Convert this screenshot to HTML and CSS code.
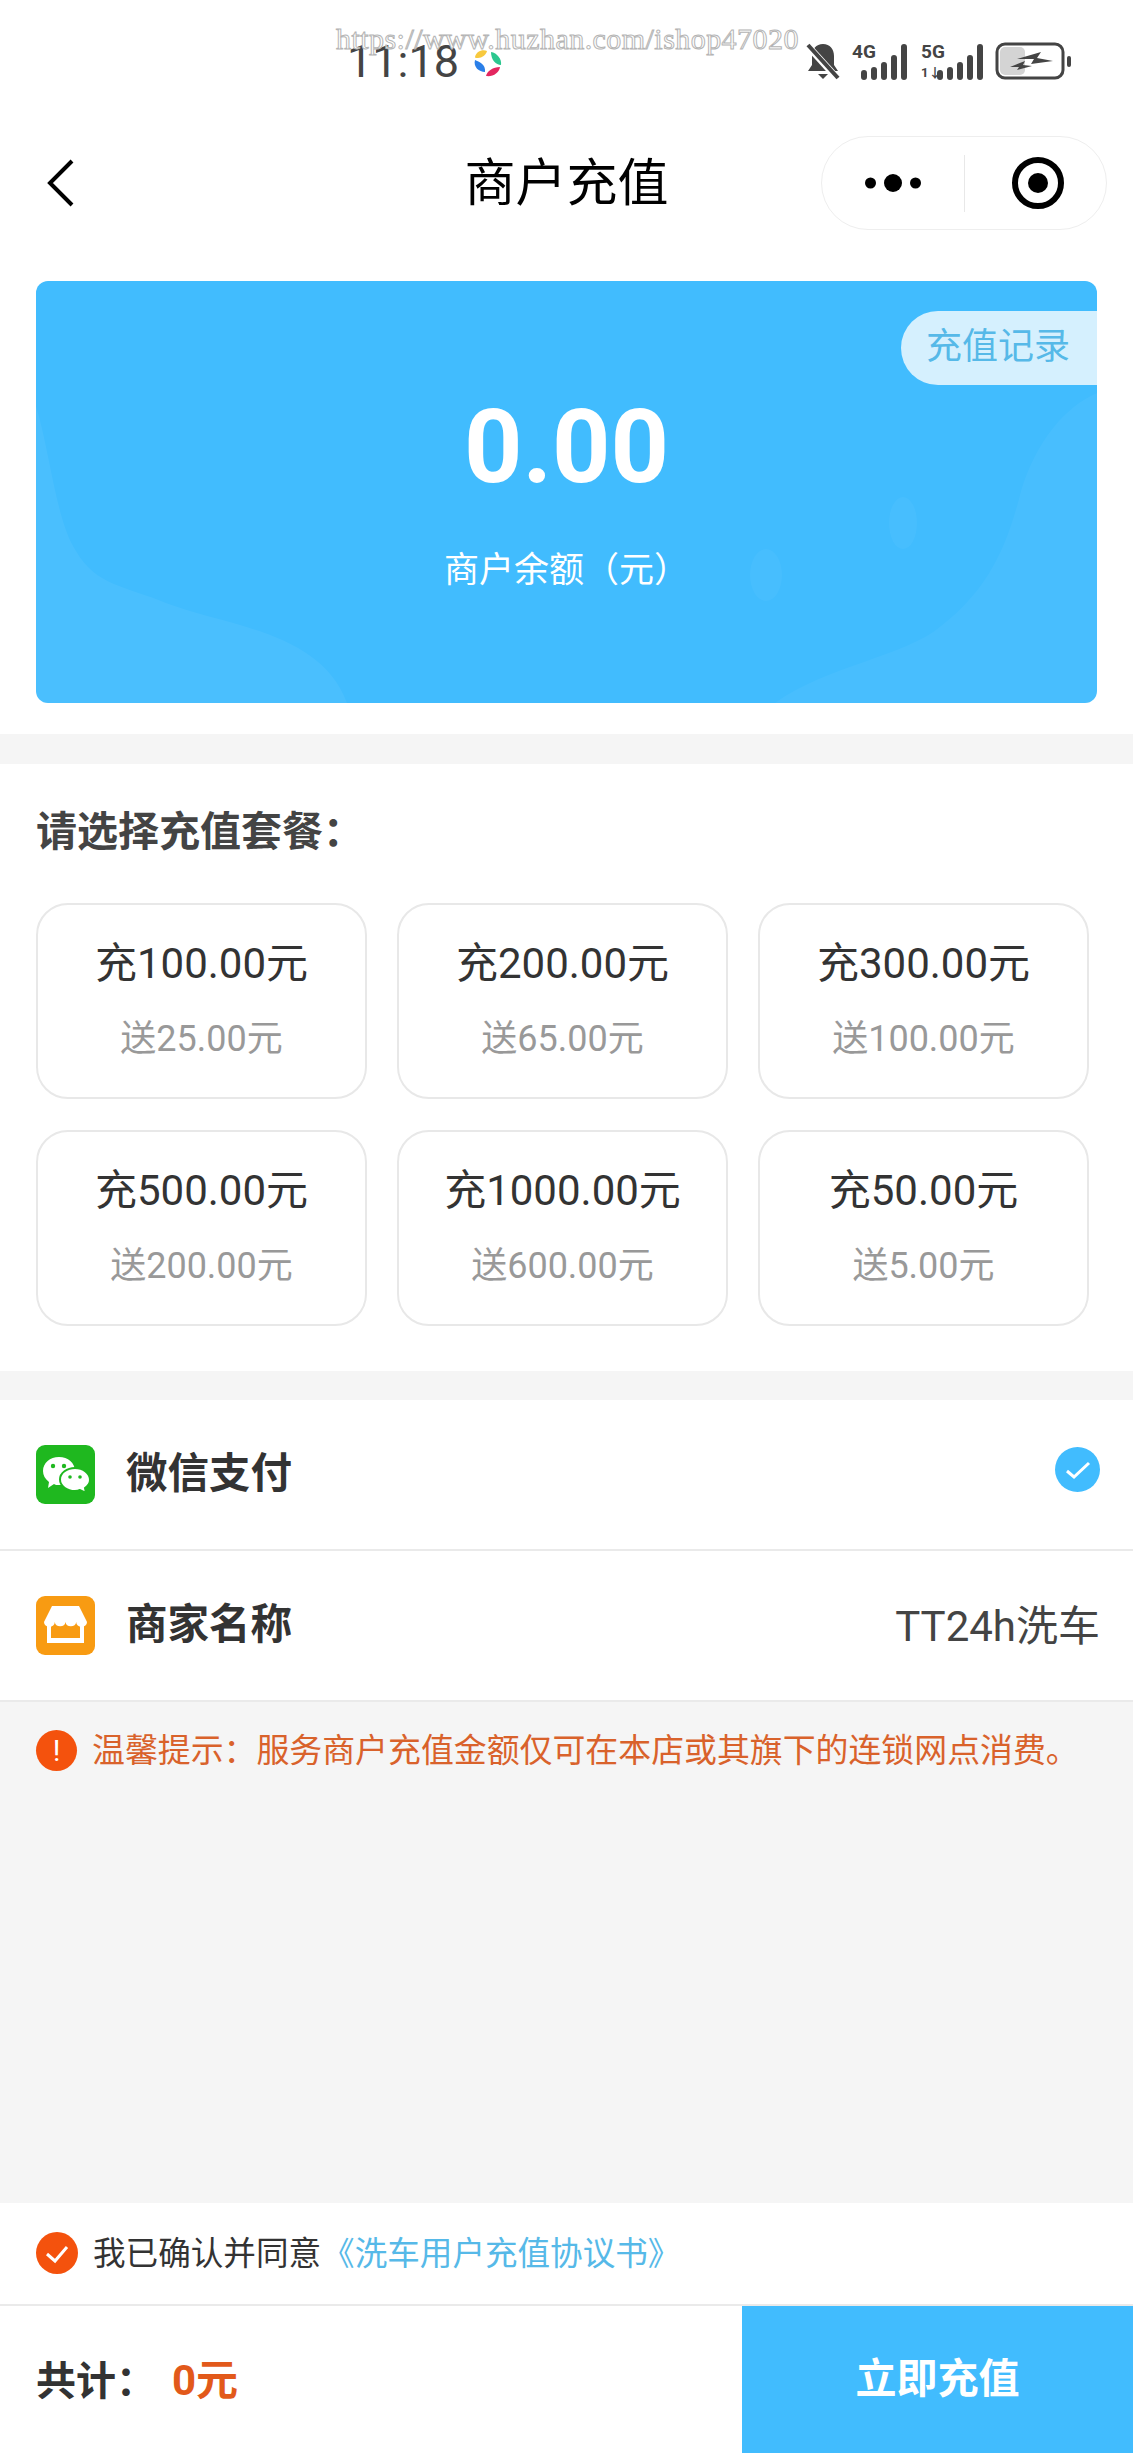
FILE: index.html
```html
<!doctype html>
<html>
<head>
<meta charset="utf-8">
<title>商户充值</title>
<link rel="stylesheet" href="styles.css">
</head>
<body>
<div class="watermark">https://www.huzhan.com/ishop47020</div>

<div class="status">
	<span class="time">11:18</span>
	<svg class="app-logo" width="29" height="27" viewBox="0 0 29 27">
		<path d="M2 7C3 2 9-1 14 1C13 5 9 8 5 8C3 8 2 8 2 7z" fill="#f7c93e"/>
		<path d="M18 2C24 3 29 9 28 15C23 15 18 10 18 2z" fill="#2cc78f"/>
		<path d="M2 10C6 12 13 14 12 22C6 22 0 17 2 10z" fill="#2a7fe8"/>
		<path d="M27 17C26 23 20 27 13 26C14 21 20 17 27 17z" fill="#e3265f"/>
	</svg>
	<div class="status-icons">
		<svg width="34" height="38" viewBox="0 0 34 38">
			<path d="M17 2c7 0 11 5 11 12v9l4 6H2l4-6v-9C6 7 10 2 17 2z" fill="#444"/>
			<path d="M12 32h10l-5 5z" fill="#444"/>
			<path d="M1 3l30 33" stroke="#fff" stroke-width="7"/>
			<path d="M2 3l30 33" stroke="#444" stroke-width="4"/>
		</svg>
		<div class="signal">
			<span class="net">4G</span>
			<svg width="46" height="36" viewBox="0 0 46 36">
				<g stroke="#444" stroke-width="6" stroke-linecap="round">
					<path d="M3 29v4M13 26v7M23 21v12M33 14v19M43 3v30"/>
				</g>
			</svg>
		</div>
		<div class="signal signal-5g">
			<span class="net">5G</span>
			<span class="updown">1↓</span>
			<svg width="46" height="36" viewBox="0 0 46 36">
				<g stroke="#444" stroke-width="6" stroke-linecap="round">
					<path d="M3 29v4M13 26v7M23 21v12M33 14v19M43 3v30"/>
				</g>
			</svg>
		</div>
		<svg class="battery" width="78" height="38" viewBox="0 0 78 38">
			<rect x="2" y="2" width="66" height="34" rx="8" fill="#fff" stroke="#444" stroke-width="3"/>
			<rect x="5" y="5" width="25" height="28" rx="5" fill="#d4d4d4"/>
			<path d="M22 17l24-7-4 6 16 3-22 3 3-5z" fill="#444"/>
			<path d="M15 25l15-6-2 4 9 1-15 4 2-3z" fill="#444"/>
			<rect x="72" y="14" width="4" height="11" rx="2" fill="#444"/>
		</svg>
	</div>
</div>

<div class="nav">
	<svg class="back" width="27" height="48" viewBox="0 0 27 48">
		<path d="M25 2L3 24l22 22" fill="none" stroke="#000" stroke-width="4"/>
	</svg>
	<div class="nav-title">商户充值</div>
	<div class="capsule">
		<svg class="capsule-more" width="56" height="20" viewBox="0 0 56 20">
			<circle cx="5.500" cy="10" r="5.500"/>
			<circle cx="28" cy="10" r="9"/>
			<circle cx="50.500" cy="10" r="5.500"/>
		</svg>
		<span class="capsule-line"></span>
		<svg class="capsule-target" width="54" height="54" viewBox="0 0 54 54">
			<circle cx="27" cy="27" r="23" fill="none" stroke="#000" stroke-width="6"/>
			<circle cx="27" cy="27" r="10"/>
		</svg>
	</div>
</div>

<div class="top">
	<div class="banner">
		<svg class="banner-waves" width="1061" height="422" viewBox="0 0 1061 422">
			<path d="M0 125C14 170 20 240 40 270C60 305 90 305 130 322C190 345 285 350 311 422H0z" fill="#fff" fill-opacity=".05"/>
			<path d="M739 422C790 385 870 375 905 345C950 310 970 270 985 210C1000 160 1030 125 1061 112V422z" fill="#fff" fill-opacity=".04"/>
			<ellipse cx="730" cy="294" rx="16" ry="26" fill="#fff" fill-opacity=".035"/>
			<ellipse cx="867" cy="242" rx="14" ry="26" fill="#fff" fill-opacity=".035"/>
		</svg>
		<div class="record">充值记录</div>
		<div class="balance">0.00</div>
		<div class="balance-label">商户余额（元）</div>
	</div>
</div>

<div class="packages">
	<div class="packages-title">请选择充值套餐：</div>
	<div class="package-grid">
		<div class="package"><div class="package-amount">充100.00元</div><div class="package-gift">送25.00元</div></div>
		<div class="package"><div class="package-amount">充200.00元</div><div class="package-gift">送65.00元</div></div>
		<div class="package"><div class="package-amount">充300.00元</div><div class="package-gift">送100.00元</div></div>
		<div class="package"><div class="package-amount">充500.00元</div><div class="package-gift">送200.00元</div></div>
		<div class="package"><div class="package-amount">充1000.00元</div><div class="package-gift">送600.00元</div></div>
		<div class="package"><div class="package-amount">充50.00元</div><div class="package-gift">送5.00元</div></div>
	</div>
</div>

<div class="rows">
	<div class="row">
		<svg class="row-icon" width="59" height="59" viewBox="0 0 59 59">
			<rect width="59" height="59" rx="9" fill="#1fb81f"/>
			<path d="M23 12c9 0 16 6 16 14s-7 14-16 14c-2 0-4 0-5-1l-6 4 1-6C9 34 7 30 7 26c0-8 7-14 16-14z" fill="#fff"/>
			<path d="M39 23c8 0 15 5 15 12 0 4-2 6-5 8l1 5-6-3c-2 1-3 1-5 1-8 0-15-5-15-11.500s7-11.500 15-11.500z" fill="#fff" stroke="#1fb81f" stroke-width="2"/>
			<g fill="#1fb81f">
				<circle cx="17" cy="21" r="2.200"/><circle cx="28" cy="21" r="2.200"/>
				<circle cx="34" cy="32" r="1.800"/><circle cx="44" cy="32" r="1.800"/>
			</g>
		</svg>
		<div class="row-name">微信支付</div>
		<svg class="row-check" width="45" height="45" viewBox="0 0 45 45">
			<circle cx="22.500" cy="22.500" r="22.500" fill="#41bcfe"/>
			<path d="M12 24l7 6 15-14" fill="none" stroke="#fff" stroke-width="3"/>
		</svg>
	</div>
	<div class="row">
		<svg class="row-icon" width="59" height="59" viewBox="0 0 59 59">
			<rect width="59" height="59" rx="9" fill="#f89b12"/>
			<path d="M11 24h37v23H11z" fill="#fff"/>
			<path d="M15 24h29v18H15z" fill="#f89b12"/>
			<path d="M16 10h27l8 16A5.400 5 0 0 1 40.200 26A5.400 5 0 0 1 29.500 26A5.400 5 0 0 1 18.800 26A5.400 5 0 0 1 8 26z" fill="#fff"/>
		</svg>
		<div class="row-name">商家名称</div>
		<div class="row-value">TT24h洗车</div>
	</div>
</div>

<div class="hint">
	<span class="hint-mark">!</span>
	<span class="hint-text">温馨提示：服务商户充值金额仅可在本店或其旗下的连锁网点消费。</span>
</div>

<div class="agree">
	<svg width="42" height="42" viewBox="0 0 42 42">
		<circle cx="21" cy="21" r="21" fill="#f4520d"/>
		<path d="M11 22l8 7 12-14" fill="none" stroke="#fff" stroke-width="3"/>
	</svg>
	<span class="agree-text">我已确认并同意</span>
	<span class="agree-link">《洗车用户充值协议书》</span>
</div>

<div class="footer">
	<div class="total">
		<span class="total-label">共计：</span>
		<span class="total-value">0元</span>
	</div>
	<div class="pay">立即充值</div>
</div>
</body>
</html>
```

FILE: styles.css
```css
*{ margin:0; padding:0; box-sizing:border-box;}
body{
	height:2453px;
	display:flex;
	flex-direction:column;
	background:#f5f5f5;
	font-family:Roboto,"Noto Sans CJK SC",sans-serif;
	color:#333;
	position:relative;
}

/* 水印 */
.watermark{
	position:absolute;
	left:336px;
	top:22px;
	font-family:"Liberation Serif",serif;
	font-size:30px;
	letter-spacing:.45px;
	color:#fff;
	-webkit-text-stroke:1px #b4b4b4;
	white-space:nowrap;
}

/* 状态栏 */
.status{
	height:136px;
	background:#fff;
	display:flex;
	align-items:flex-start;
	padding:38px 60px 0 347px;
}
.time{ font-size:45px; line-height:48px; color:#444;}
.app-logo{ margin:12px 0 0 14px;}
.status-icons{ margin-left:auto; display:flex; align-items:flex-start; gap:12px; margin-top:4px;}
.signal{ position:relative; width:55px; height:38px; display:flex; justify-content:flex-end; align-items:flex-end;}
.signal-5g{ width:62px; margin-left:2px;}
.net{
	position:absolute;
	left:0;
	top:0;
	font-size:19px;
	line-height:20px;
	font-weight:700;
	color:#444;
}
.updown{
	position:absolute;
	left:0;
	bottom:0;
	font-size:13px;
	line-height:14px;
	font-weight:700;
	color:#444;
}

/* 导航 */
.nav{
	height:94px;
	background:#fff;
	display:grid;
	grid-template-columns:minmax(0,1fr) auto minmax(0,1fr);
	align-items:center;
	padding:0 26px;
}
.back{ display:block; margin-left:21px;}
.nav-title{ font-size:51px; color:#000; line-height:60px; margin-top:2px;}
.capsule{
	justify-self:end;
	width:286px;
	height:94px;
	border:1px solid #eee;
	border-radius:47px;
	display:flex;
	align-items:center;
	padding-left:43px;
}
.capsule-more{ margin-right:27px;}
.capsule-line{ width:1px; height:57px; background:#e8e8e8; margin-left:16px;}
.capsule-target{ margin-left:46px;}

/* 余额卡片 */
.top{ height:504px; background:#fff; padding:51px 36px 0;}
.banner{
	height:422px;
	background:#41bcfe;
	border-radius:12px;
	position:relative;
	overflow:hidden;
	text-align:center;
	padding-top:111px;
	color:#fff;
}
.banner-waves{ position:absolute; left:0; top:0;}
.record{
	position:absolute;
	right:0;
	top:30px;
	width:196px;
	height:74px;
	line-height:72px;
	padding-left:25px;
	text-align:left;
	background:#d5f0fe;
	border-radius:37px 0 0 37px;
	font-size:36px;
	color:#56b9e8;
}
.balance{ position:relative; font-size:102px; line-height:110px; font-weight:700;}
.balance-label{ position:relative; margin-top:45px; font-size:35px; line-height:48px;}

/* 套餐 */
.packages{ margin-top:30px; height:607px; background:#fff; padding:40px 45px 0 36px;}
.packages-title{ font-size:41px; line-height:56px; font-weight:700; color:#444;}
.package-grid{
	margin-top:43px;
	display:grid;
	grid-template-columns:repeat(3,331px);
	grid-auto-rows:196px;
	column-gap:30px;
	row-gap:31px;
}
.package{
	border:2px solid #e8e8e8;
	border-radius:32px;
	text-align:center;
	padding-top:31px;
}
.package-amount{ font-size:42px; line-height:56px;}
.package-gift{ margin-top:22px; font-size:36px; line-height:50px; color:#999;}

/* 支付方式 */
.rows{ margin-top:29px; background:#fff;}
.row{
	height:151px;
	display:flex;
	align-items:center;
	padding:0 33px 0 36px;
	border-bottom:2px solid #eaeaea;
}
.row-name{ margin:0 0 9px 31px; font-size:41.500px; font-weight:700;}
.row-check{ margin-left:auto; margin-bottom:10px;}
.row-value{ margin:0 0 6px auto; font-size:42px; color:#444;}

/* 提示 */
.hint{
	flex:1;
	display:flex;
	align-items:flex-start;
	padding:28px 36px 0;
}
.hint-mark{
	width:41px;
	height:41px;
	border-radius:50%;
	background:#f4520d;
	color:#fff;
	text-align:center;
	font-size:30px;
	line-height:41px;
}
.hint-text{ margin-left:15px; font-size:32.900px; line-height:41px; color:#d9622b; white-space:nowrap;}

/* 协议 */
.agree{
	height:103px;
	background:#fff;
	border-bottom:2px solid #eaeaea;
	display:flex;
	align-items:center;
	padding:0 0 2px 36px;
}
.agree-text{ margin:0 0 5px 15px; font-size:32.600px;}
.agree-link{ margin:0 0 5px 1px; font-size:32.600px; color:#56b9e8;}

/* 底部 */
.footer{ height:147px; background:#fff; display:flex; align-items:center;}
.total{ flex:1; padding:0 0 6px 36px; font-size:40px; font-weight:700;}
.total-value{ color:#e2591a; margin-left:6px; font-size:42px;}
.pay{
	width:391px;
	height:147px;
	background:#41bcfe;
	color:#fff;
	text-align:center;
	font-size:41px;
	font-weight:700;
	line-height:147px;
}
```
